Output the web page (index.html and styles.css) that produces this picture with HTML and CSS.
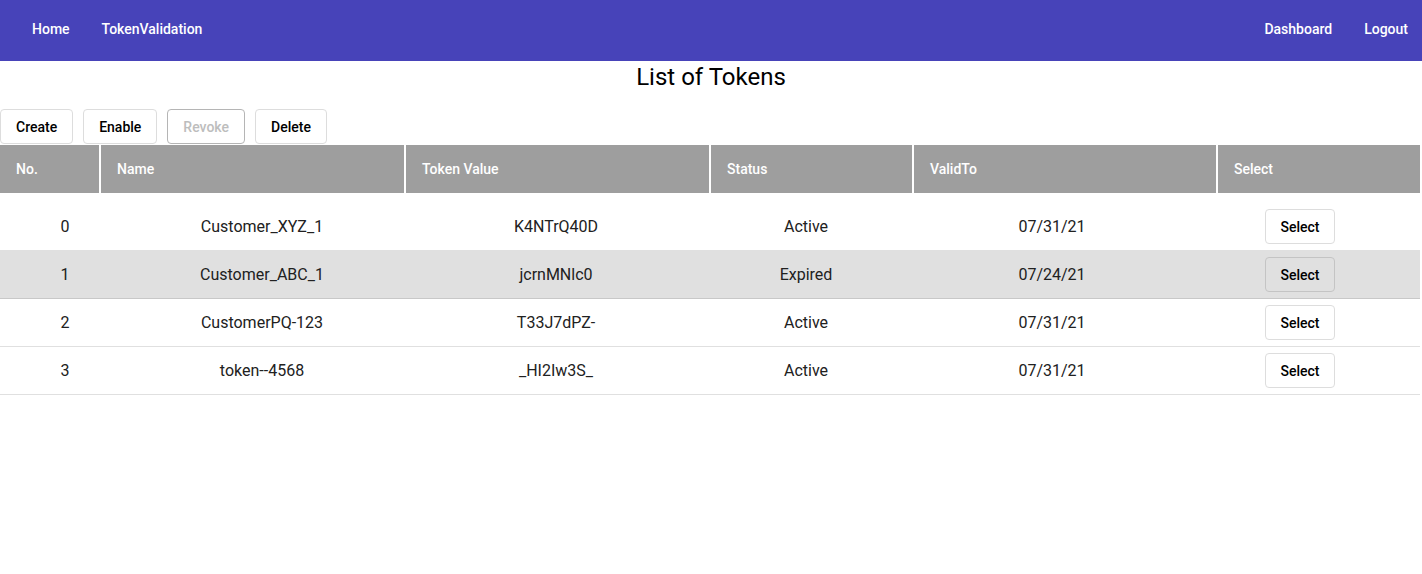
FILE: index.html
```html
<!DOCTYPE html>
<html lang="en">
<head>
  <meta charset="UTF-8">
  <meta name="viewport" content="width=device-width, initial-scale=1.0">
  <title>Token Validation</title>
  <link rel="stylesheet" href="styles.css">
</head>
<body>
  <nav class="navbar">
      <div class="nav-left">
          <a href="#" class="nav-link">Home</a>
          <a href="#" class="nav-link">TokenValidation</a>
      </div>
      <div class="nav-right">
          <a href="#" class="nav-link">Dashboard</a>
          <a href="#" class="nav-link">Logout</a>
      </div>
  </nav>

  <h1 class="page-title">List of Tokens</h1>

  <div class="toolbar">
      <button class="btn">Create</button>
      <button class="btn">Enable</button>
      <button class="btn" disabled>Revoke</button>
      <button class="btn">Delete</button>
  </div>

  <div class="token-list">
      <table class="token-head">
          <colgroup>
              <col class="h-no">
              <col class="h-name">
              <col class="h-token">
              <col class="h-status">
              <col class="h-valid">
              <col class="h-select">
          </colgroup>
          <thead>
              <tr>
                  <th>No.</th>
                  <th>Name</th>
                  <th>Token Value</th>
                  <th>Status</th>
                  <th>ValidTo</th>
                  <th>Select</th>
              </tr>
          </thead>
      </table>

      <table class="token-body">
          <colgroup>
              <col class="b-no">
              <col class="b-name">
              <col class="b-token">
              <col class="b-status">
              <col class="b-valid">
              <col class="b-select">
          </colgroup>
          <tbody>
              <tr>
                  <td>0</td>
                  <td>Customer_XYZ_1</td>
                  <td>K4NTrQ40D</td>
                  <td>Active</td>
                  <td>07/31/21</td>
                  <td><button class="btn select-btn">Select</button></td>
              </tr>
              <tr class="selected">
                  <td>1</td>
                  <td>Customer_ABC_1</td>
                  <td>jcrnMNlc0</td>
                  <td>Expired</td>
                  <td>07/24/21</td>
                  <td><button class="btn select-btn">Select</button></td>
              </tr>
              <tr>
                  <td>2</td>
                  <td>CustomerPQ-123</td>
                  <td>T33J7dPZ-</td>
                  <td>Active</td>
                  <td>07/31/21</td>
                  <td><button class="btn select-btn">Select</button></td>
              </tr>
              <tr>
                  <td>3</td>
                  <td>token--4568</td>
                  <td>_HI2Iw3S_</td>
                  <td>Active</td>
                  <td>07/31/21</td>
                  <td><button class="btn select-btn">Select</button></td>
              </tr>
          </tbody>
      </table>
  </div>
</body>
</html>
```

FILE: styles.css
```css
body {
    font-family: 'Roboto', 'Liberation Sans', sans-serif;
    margin: 0;
    padding: 0;
    background: #ffffff;
    color: #212121;
}

.navbar {
    background: #4743b9;
    height: 61px;
    display: flex;
    justify-content: space-between;
    align-items: center;
    padding: 0 14px 3px 16px;
    box-sizing: border-box;
}

.nav-left, .nav-right {
    display: flex;
}

.nav-link {
    color: #ffffff;
    text-decoration: none;
    font-size: 14px;
    font-weight: 500;
    padding: 0 16px;
}

.nav-right .nav-link:last-child {
    padding-right: 0;
}

.page-title {
    text-align: center;
    font-size: 24px;
    font-weight: 400;
    color: #000000;
    margin: 2px 0 0;
    line-height: 28px;
}

.toolbar {
    display: flex;
    gap: 10px;
    margin-top: 18px;
}

.btn {
    font-family: inherit;
    font-size: 14px;
    font-weight: 500;
    color: #000000;
    background: #ffffff;
    border: 1px solid #dddddd;
    border-radius: 4px;
    height: 35px;
    padding: 0 15px;
    cursor: pointer;
}

.btn:disabled {
    color: #bdbdbd;
    border-color: #b5b5b5;
    cursor: default;
}

.token-list {
    width: 1420px;
    margin-top: 1px;
}

.token-head, .token-body {
    width: 100%;
    border-collapse: collapse;
    table-layout: fixed;
}

.h-no { width: 100px; }
.h-name { width: 305px; }
.h-token { width: 305px; }
.h-status { width: 203px; }
.h-valid { width: 304px; }
.h-select { width: 203px; }

.token-head th {
    background: #9e9e9e;
    color: #ffffff;
    font-size: 14px;
    font-weight: 500;
    text-align: left;
    height: 48px;
    padding: 0 16px;
    border-left: 2px solid #ffffff;
}

.token-head th:first-child {
    border-left: none;
}

.token-body {
    margin-top: 10px;
}

.b-no { width: 130px; }
.b-name { width: 264px; }
.b-token { width: 324px; }
.b-status { width: 176px; }
.b-valid { width: 316px; }
.b-select { width: 210px; }

.token-body td {
    text-align: center;
    font-size: 16px;
    color: #212121;
    height: 47px;
    padding: 0;
    border-bottom: 1px solid #e0e0e0;
}

.token-body td:last-child {
    padding-right: 30px;
}

.token-body tr.selected td {
    background: #e0e0e0;
    border-bottom-color: #c8c8c8;
}

.select-btn {
    width: 70px;
    padding: 0;
    font-size: 14px;
}

tr.selected .select-btn {
    background: #e0e0e0;
    border-color: #c4c4c4;
}
```
